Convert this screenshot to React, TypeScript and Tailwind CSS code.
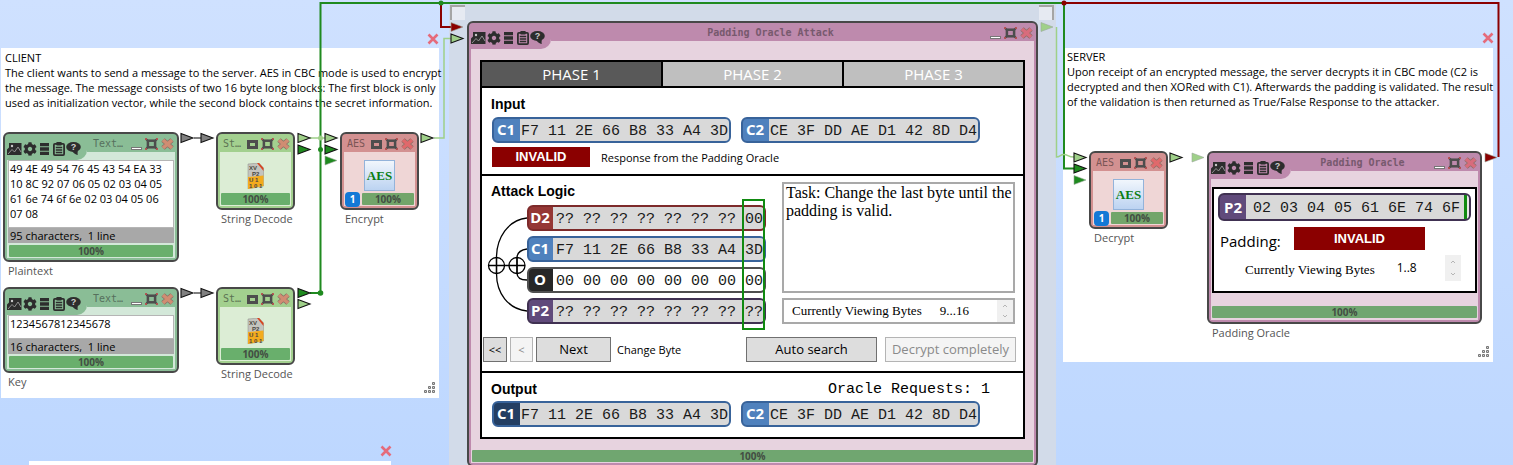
import React from "react";
import { FaCog } from "react-icons/fa";

const ui = "font-['Open_Sans','Noto_Sans',sans-serif]";
const mono = "font-['Liberation_Mono',monospace]";
const serif = "font-['Liberation_Serif',serif]";

type Theme = { outer: string; light: string; title: string; bar: string; closeFill: string };

const green: Theme = { outer: "bg-[#8abd96]", light: "bg-[#d3e8d9]", title: "text-[#56705d]", bar: "bg-[#69af6c]", closeFill: "#d08d72" };
const lime: Theme = { outer: "bg-[#a3d08f]", light: "bg-[#dcedd5]", title: "text-[#5c7353]", bar: "bg-[#69af6c]", closeFill: "#d08d72" };
const red: Theme = { outer: "bg-[#d39191]", light: "bg-[#efd6d6]", title: "text-[#7b5555]", bar: "bg-[#72a56a]", closeFill: "#e0696b" };
const pink: Theme = { outer: "bg-[#be8aad]", light: "bg-[#e7d3df]", title: "text-[#77596d]", bar: "bg-[#70a670]", closeFill: "#d86c7c" };

function PictureIcon() {
  return (
    <svg width="15" height="12" viewBox="0 0 15 12">
      <path d="M2 0h12.500V12H0V6.500l2-2z" fill="#2d2d2d" />
      <path d="M1 11l4-4.500 2.500 2.500 3.500-5 3 5" fill="none" stroke="#a9a9a9" strokeWidth="0.8" />
      <circle cx="5" cy="3" r="1.200" fill="#c9c9c9" />
    </svg>
  );
}

function ClipboardIcon() {
  return (
    <svg width="12" height="14" viewBox="0 0 12 14">
      <rect x="0.9" y="1.900" width="10.200" height="11.200" rx="1" fill="none" stroke="#2d2d2d" strokeWidth="1.800" />
      <rect x="3.200" y="0" width="5.600" height="3.400" rx="1" fill="#2d2d2d" />
      <path d="M2.800 5.500h6.400M2.800 8h6.400M2.800 10.500h6.400" stroke="#2d2d2d" strokeWidth="1.500" />
    </svg>
  );
}

function ListIcon() {
  return (
    <svg width="9" height="12" viewBox="0 0 9 12">
      <path d="M0 1.700h9M0 6h9M0 10.300h9" stroke="#2d2d2d" strokeWidth="3.300" />
    </svg>
  );
}

function HelpIcon() {
  return (
    <svg width="15" height="13" viewBox="0 0 15 13">
      <ellipse cx="7.500" cy="5" rx="7.300" ry="5" fill="#2d2d2d" />
      <path d="M6 8.500h6c-.5 2-.5 3-.2 4.500C9.500 12.500 7 11 6 8.500z" fill="#2d2d2d" />
      <text x="7.500" y="8.300" textAnchor="middle" fontFamily="Liberation Sans" fontSize="9" fontWeight="bold" fill="#d0d0d0">?</text>
    </svg>
  );
}

function Tools({ theme }: { theme: Theme }) {
  return (
    <div className={`flex h-[24px] items-center gap-px rounded-br-[10px] pr-[6px] pt-px text-[#2d2d2d] ${theme.outer}`}>
      <button type="button" aria-label="Presentation"><PictureIcon /></button>
      <button type="button" aria-label="Settings"><FaCog size={14} /></button>
      <button type="button" aria-label="Data" className="ml-[2px]"><ListIcon /></button>
      <button type="button" aria-label="Log" className="ml-[3px]"><ClipboardIcon /></button>
      <button type="button" aria-label="Help"><HelpIcon /></button>
    </div>
  );
}

function MaxIcon() {
  return (
    <svg width="13" height="12" viewBox="0 0 13 12">
      <path d="M0.500 0.500l3 3M12.500 0.500l-3 3M0.500 11.500l3-3M12.500 11.500l-3-3" stroke="#4d4d4d" strokeWidth="2" />
      <rect x="2.900" y="2.700" width="7.200" height="6.600" fill="none" stroke="#4d4d4d" strokeWidth="2.500" />
      <path d="M0 0h2v2H0zM11 0h2v2h-2zM0 10h2v2H0zM11 10h2v2h-2z" fill="#c94f4f" opacity="0.75" />
    </svg>
  );
}

function CloseIcon({ fill }: { fill: string }) {
  return (
    <svg width="13" height="12" viewBox="0 0 13 12">
      <path d="M2 2l9 8M11 2l-9 8" stroke="#8b6f66" strokeWidth="5" />
      <path d="M2 2l9 8M11 2l-9 8" stroke={fill} strokeWidth="3.600" />
    </svg>
  );
}

function WindowButtons({ theme, small }: { theme: Theme; small?: boolean }) {
  return (
    <div className="flex items-center gap-[3px]">
      {small ? (
        <button type="button" aria-label="Restore" className="h-[9px] w-[11px] border-[3px] border-[#4d4d4d]" />
      ) : (
        <button type="button" aria-label="Minimize" className="flex h-[12px] w-[11px] items-end">
          <span className="h-[3px] w-full border border-[#777] bg-white" />
        </button>
      )}
      <button type="button" aria-label="Maximize"><MaxIcon /></button>
      <button type="button" aria-label="Close"><CloseIcon fill={theme.closeFill} /></button>
    </div>
  );
}

function Title({ theme, children }: { theme: Theme; children: React.ReactNode }) {
  return (
    <h2 className={`flex-1 whitespace-nowrap font-['DejaVu_Sans_Mono',monospace] text-[10px] leading-[14px] ${theme.title}`}>{children}</h2>
  );
}

function Progress({ theme, className = "" }: { theme: Theme; className?: string }) {
  return (
    <div className={`h-[12px] rounded-[1px] text-center font-['Open_Sans',sans-serif] text-[10px] font-bold leading-[12px] text-[#434e43] ${theme.bar} ${className}`}>
      100%
    </div>
  );
}

function Frame({ theme, place, caption, children }: { theme: Theme; place: string; caption?: string; children: React.ReactNode }) {
  return (
    <section className={`absolute ${place}`}>
      <div className={`rounded-[6px] border-2 border-[#484848] p-[2px] ${theme.outer}`}>
        <div className={`flex flex-col ${theme.light}`}>{children}</div>
      </div>
      {caption && <p className={`mt-[2px] whitespace-nowrap pl-[5px] text-[11px] leading-[14px] text-[#555] ${ui}`}>{caption}</p>}
    </section>
  );
}

function WideHeader({ theme, title, center }: { theme: Theme; title: string; center?: boolean }) {
  return (
    <header className="flex items-start">
      <Tools theme={theme} />
      <div className={`flex h-[16px] flex-1 items-center pr-px ${center ? "text-center" : "pl-[6px]"} ${theme.outer}`}>
        <Title theme={theme}>{center ? <b>{title}</b> : title}</Title>
        <WindowButtons theme={theme} />
      </div>
    </header>
  );
}

function TextNode({ place, caption, text, status, area }: { place: string; caption: string; text: string; status: string; area: string }) {
  return (
    <Frame theme={green} place={place} caption={caption}>
      <WideHeader theme={green} title="Text…" />
      <textarea
        aria-label={caption}
        readOnly
        defaultValue={text}
        className={`mx-px block resize-none overflow-hidden border border-[#b5b5b5] bg-white px-px text-[11px] leading-[15px] text-black outline-none ${area} ${ui}`}
      />
      <p className={`mx-px whitespace-pre bg-[#a8a8a8] pl-[2px] text-[11px] leading-[15px] text-black ${ui}`}>{status}</p>
      <Progress theme={green} className="m-[2px] mb-px" />
    </Frame>
  );
}

function DecodeIcon() {
  return (
    <svg width="17" height="26" viewBox="0 0 17 26">
      <path d="M1 1l11-1 4.500 5v18L1 26z" fill="#c4c4be" stroke="#8d8d88" strokeWidth="0.500" />
      <path d="M1 14l15.500-1.500V23L1 26z" fill="#f3ab1d" />
      <path d="M10 0l6.500 8V5l-4.500-5z" fill="#d9441e" />
      <g fontFamily="Liberation Sans" fontSize="6" fontWeight="bold" fill="#4a4740">
        <text x="2" y="7">XV</text>
        <text x="5" y="13">P2</text>
        <text x="2" y="19">U 1</text>
        <text x="2" y="24.500">1 0 1</text>
      </g>
    </svg>
  );
}

function SmallHeader({ theme, title }: { theme: Theme; title: string }) {
  return (
    <header className={`flex h-[16px] items-center pl-[3px] pr-px ${theme.outer}`}>
      <Title theme={theme}>{title}</Title>
      <WindowButtons theme={theme} small />
    </header>
  );
}

function DecodeNode({ place }: { place: string }) {
  return (
    <Frame theme={lime} place={place} caption="String Decode">
      <SmallHeader theme={lime} title="St…" />
      <div className="flex h-[39px] items-end justify-center pb-[2px]"><DecodeIcon /></div>
      <Progress theme={lime} className="m-px mt-[2px]" />
    </Frame>
  );
}

function AesNode({ place, caption }: { place: string; caption: string }) {
  return (
    <Frame theme={red} place={place} caption={caption}>
      <SmallHeader theme={red} title="AES" />
      <div className="flex h-[39px] justify-center pt-[8px]">
        <div className="flex h-[31px] w-[31px] items-center justify-center border border-[#93b3da] bg-linear-to-b from-[#f1f6fc] to-[#bcd3f1] font-['Liberation_Serif',serif] text-[13px] font-bold text-[#0a7d12]">
          AES
        </div>
      </div>
      <div className="mb-px mt-[2px] flex h-[12px] items-center gap-[2px] px-px">
        <span className={`flex h-[15px] w-[15px] items-center justify-center rounded-[4px] bg-[#1379d6] text-[10px] font-bold text-white ${ui}`}>1</span>
        <Progress theme={red} className="flex-1" />
      </div>
    </Frame>
  );
}

type Tone = "blue" | "navy" | "red" | "black" | "purple";
const tones: Record<Tone, string> = {
  blue: "border-[#38639a] bg-[#4f81bd]",
  navy: "border-[#38639a] bg-[#243f63]",
  red: "border-[#7d2a2a] bg-[#953735]",
  black: "border-[#4f4f4f] bg-[#262626]",
  purple: "border-[#403152] bg-[#604a7b]",
};

function Bytes({ tone, label, value, slim, white }: { tone: Tone; label: string; value: string; slim?: boolean; white?: boolean }) {
  return (
    <div className={`flex h-[26px] w-[239px] overflow-hidden rounded-[6px] border-2 ${tones[tone]}`}>
      <span className={`flex items-center justify-center pb-px pr-[2px] font-['Open_Sans',sans-serif] text-[15px] font-bold text-white ${slim ? "w-[24px]" : "w-[26px]"}`}>{label}</span>
      <span className={`flex flex-1 items-center whitespace-pre pt-[3px] text-[15px] leading-[18px] text-[#1a1a1a] ${slim ? "pl-[3px]" : "pl-px"} ${white ? "bg-white" : "bg-[#d9d9d9]"} ${mono}`}>{value}</span>
    </div>
  );
}

function Invalid({ size }: { size: string }) {
  return (
    <strong className={`flex items-center justify-center bg-[#8b0000] font-['Liberation_Sans',sans-serif] text-[13px] text-white ${size}`}>INVALID</strong>
  );
}

function Heading({ children }: { children: React.ReactNode }) {
  return <h3 className="font-['Liberation_Sans',sans-serif] text-[14px] font-bold leading-[18px] text-black">{children}</h3>;
}

function Spinner({ size }: { size: string }) {
  return (
    <div className={`flex flex-col bg-[#f0f0f0] text-[#b5b5b5] ${size}`}>
      <button type="button" disabled aria-label="Previous bytes" className="flex flex-1 items-center justify-center">
        <svg width="4" height="3" viewBox="0 0 4 3"><path d="M0 3l2-2 2 2" fill="none" stroke="currentColor" /></svg>
      </button>
      <button type="button" disabled aria-label="Next bytes" className="flex flex-1 items-center justify-center">
        <svg width="4" height="3" viewBox="0 0 4 3"><path d="M0 0l2 2 2-2" fill="none" stroke="currentColor" /></svg>
      </button>
    </div>
  );
}

function Push({ children, className, disabled }: { children: React.ReactNode; className: string; disabled?: boolean }) {
  return (
    <button
      type="button"
      disabled={disabled}
      className={`h-[25px] whitespace-nowrap border pt-px ${disabled ? "border-[#b4b4b4] bg-[#f4f4f4] text-[#8a8a8a]" : "border-[#707070] bg-[#dddddd] text-black"} ${ui} ${className}`}
    >
      {children}
    </button>
  );
}

function XorDiagram() {
  return (
    <svg width="44" height="119" viewBox="0 0 44 119" fill="none" stroke="#000" strokeWidth="1.300">
      <path d="M44 13C25 15 13.500 33 13.500 52.500V68.500C13.500 88 25 104 44 106" />
      <path d="M44 44C37 45 34 48 34 53V68C34 72 37 75 44 75" />
      <circle cx="13.500" cy="60.500" r="8" />
      <circle cx="34" cy="60.500" r="8" />
      <path d="M5.500 60.500H42M13.500 52V69M34 52V69" />
    </svg>
  );
}

function AttackNode() {
  const phase = "flex-1 border-black text-[15px] text-white font-['Open_Sans',sans-serif]";
  return (
    <Frame theme={pink} place="left-[467px] top-[21px] w-[571px]">
      <WideHeader theme={pink} title="Padding Oracle Attack" center />
      <div className="mx-[9px] mt-[11px] border-2 border-black bg-white">
        <nav className="flex h-[26px] border-b-2 border-black">
          <button type="button" className={`${phase} bg-[#595959]`}>PHASE 1</button>
          <button type="button" className={`${phase} border-l-2 bg-[#bfbfbf]`}>PHASE 2</button>
          <button type="button" className={`${phase} border-l-2 bg-[#bfbfbf]`}>PHASE 3</button>
        </nav>

        <div className="border-b-2 border-black px-[9px] pb-[7px] pt-[7px]">
          <Heading>Input</Heading>
          <div className="mt-1 flex gap-[10px] pl-px">
            <Bytes tone="blue" label="C1" value="F7 11 2E 66 B8 33 A4 3D" />
            <Bytes tone="blue" label="C2" value="CE 3F DD AE D1 42 8D D4" />
          </div>
          <div className="mt-1 flex items-center gap-[11px] pl-px">
            <Invalid size="h-[20px] w-[98px]" />
            <span className={`text-[11px] leading-[15px] text-black ${ui}`}>Response from the Padding Oracle</span>
          </div>
        </div>

        <div className="border-b-2 border-black pb-[9px] pl-px pt-[6px]">
          <div className="flex items-start justify-between pr-[8px]">
            <div>
              <div className="pl-[8px]"><Heading>Attack Logic</Heading></div>
              <div className="mt-[5px] flex">
                <XorDiagram />
                <div className="relative flex flex-col gap-[5px]">
                  <Bytes slim tone="red" label="D2" value="?? ?? ?? ?? ?? ?? ?? 00" />
                  <Bytes slim tone="blue" label="C1" value="F7 11 2E 66 B8 33 A4 3D" />
                  <Bytes slim white tone="black" label="O" value="00 00 00 00 00 00 00 00" />
                  <Bytes slim tone="purple" label="P2" value="?? ?? ?? ?? ?? ?? ?? ??" />
                  <span className="absolute -bottom-[6px] -top-[6px] right-px w-[23px] border-2 border-[#118a11]" />
                </div>
              </div>
            </div>
            <div className="flex w-[233px] flex-col gap-[5px]">
              <p className={`h-[111px] border-2 border-[#a9a9a9] pl-[2px] text-[16px] leading-[18px] text-black ${serif}`}>
                Task: Change the last byte until the padding is valid.
              </p>
              <div className={`flex h-[26px] items-center border-2 border-[#a9a9a9] pl-[8px] text-[13px] text-black ${serif}`}>
                <span>Currently Viewing Bytes</span>
                <span className="ml-[18px] flex-1">9...16</span>
                <Spinner size="h-full w-[16px]" />
              </div>
            </div>
          </div>
          <div className="mt-[13px] flex items-center pr-[7px]">
            <Push className="w-[24px] text-[11px]">&lt;&lt;</Push>
            <Push disabled className="ml-[3px] w-[23px] text-[11px]">&lt;</Push>
            <Push className="ml-[3px] w-[75px] text-[13px]">Next</Push>
            <span className={`ml-[6px] flex-1 pt-px text-[11px] text-black ${ui}`}>Change Byte</span>
            <Push className="w-[131px] text-[13px]">Auto search</Push>
            <Push disabled className="ml-[8px] w-[131px] text-[13px]">Decrypt completely</Push>
          </div>
        </div>

        <div className="px-[9px] pb-[10px] pt-[7px]">
          <div className="flex items-center justify-between pr-[24px]">
            <Heading>Output</Heading>
            <span className={`whitespace-pre pt-px text-[15px] leading-[17px] text-black ${mono}`}>Oracle Requests: 1</span>
          </div>
          <div className="mt-[3px] flex gap-[10px] pl-px">
            <Bytes tone="navy" label="C1" value="F7 11 2E 66 B8 33 A4 3D" />
            <Bytes tone="blue" label="C2" value="CE 3F DD AE D1 42 8D D4" />
          </div>
        </div>
      </div>
      <Progress theme={pink} className="mx-px mb-px mt-[11px]" />
    </Frame>
  );
}

function OracleNode() {
  return (
    <Frame theme={pink} place="left-[1207px] top-[151px] w-[275px]" caption="Padding Oracle">
      <WideHeader theme={pink} title="Padding Oracle" center />
      <div className="mx-px mt-[8px] h-[106px] border-2 border-black bg-white px-[4px] pt-[4px]">
        <div className="flex h-[28px] overflow-hidden rounded-[6px] border-2 border-[#403152] bg-[#604a7b]">
          <span className="flex w-[26px] items-center justify-center font-['Open_Sans',sans-serif] text-[15px] font-bold text-white">P2</span>
          <span className={`flex flex-1 items-center whitespace-pre bg-[#d9d9d9] pl-[7px] pt-[3px] text-[15px] leading-[18px] text-[#1a1a1a] ${mono}`}>02 03 04 05 61 6E 74 6F</span>
          <span className="w-[3px] bg-[#118a11]" />
          <span className="w-[2px] bg-[#e8e8e8]" />
        </div>
        <div className="mt-[6px] flex h-[23px] items-start">
          <span className={`w-[76px] pl-[2px] pt-[2px] text-[15px] leading-[24px] text-black ${ui}`}>Padding:</span>
          <Invalid size="h-[23px] w-[131px]" />
        </div>
        <div className={`mt-[5px] flex items-center pl-[27px] pr-[10px] text-[13px] text-black ${serif}`}>
          <span className="pt-[3px]">Currently Viewing Bytes</span>
          <span className={`ml-[22px] flex-1 text-[12px] ${ui}`}>1..8</span>
          <Spinner size="h-[26px] w-[16px]" />
        </div>
      </div>
      <Progress theme={pink} className="mx-px mb-[2px] mt-[13px]" />
    </Frame>
  );
}

function Cross({ place }: { place: string }) {
  return (
    <button type="button" aria-label="Remove note" className={`absolute ${place}`}>
      <svg width="12" height="12" viewBox="0 0 12 12"><path d="M1.500 1.500l9 9M10.500 1.500l-9 9" stroke="#e56b7b" strokeWidth="2.600" /></svg>
    </button>
  );
}

function Grip() {
  return (
    <svg width="12" height="12" viewBox="0 0 12 12" className="absolute bottom-[4px] right-[3px]" fill="#d0d0d0" stroke="#777" strokeWidth="1">
      <path d="M8.500 0.500h2v2h-2zM8.500 4.500h2v2h-2zM4.500 4.500h2v2h-2zM8.500 8.500h2v2h-2zM4.500 8.500h2v2h-2zM0.500 8.500h2v2h-2z" />
    </svg>
  );
}

function Note({ place, title, lines }: { place: string; title: string; lines: string[] }) {
  return (
    <article className={`absolute whitespace-nowrap bg-white px-[4px] text-[11px] leading-[15px] text-black ${ui} ${place}`}>
      <h2>{title}</h2>
      <p className="whitespace-pre">{lines.join("\n")}</p>
      <Grip />
    </article>
  );
}

const LIGHT = "#9fd089";
const DARK = "#1f8a1f";
const GRAY = "#808080";
const MAROON = "#8b0000";

function Port({ x, y, fill, bare }: { x: number; y: number; fill: string; bare?: boolean }) {
  return <path d={`M${x} ${y - 4.5}L${x + 12} ${y}L${x} ${y + 4.5}Z`} fill={fill} stroke={bare ? "#9aa79a" : "#111"} strokeWidth={bare ? 0.6 : 1.1} />;
}

function Wires() {
  return (
    <svg className="pointer-events-none absolute inset-0 h-full w-full" fill="none" strokeWidth="2">
      <path d="M1064 3H1498.500V157" stroke={MAROON} />
      <path d="M441 3V27H451" stroke={MAROON} />
      <path d="M310 293H320.500V3H1064V168.500H1074" stroke={DARK} />
      <path d="M310 138H326M434 138H444V38.500H451" stroke={LIGHT} strokeWidth="1.500" />
      <path d="M1056.500 27V157C1060 157 1060 154.500 1064 154.500S1068 157 1074 157" stroke={LIGHT} strokeWidth="1.500" />
      <path d="M194 138H201M194 293H201" stroke={GRAY} />
      <circle cx="320.500" cy="138" r="2.500" fill={LIGHT} />
      <circle cx="320.500" cy="149.500" r="2.500" fill={DARK} />
      <circle cx="320.500" cy="293" r="2.800" fill={DARK} />
      <circle cx="441" cy="3" r="2.500" fill={DARK} />
      <circle cx="1064" cy="3" r="2.500" fill={MAROON} />
      <Port x={181} y={138} fill={GRAY} />
      <Port x={201} y={138} fill={GRAY} />
      <Port x={181} y={293} fill={GRAY} />
      <Port x={201} y={293} fill={GRAY} />
      <Port x={298} y={138} fill={LIGHT} />
      <Port x={298} y={149.5} fill={DARK} />
      <Port x={298} y={293} fill={DARK} />
      <Port x={298} y={304} fill={LIGHT} />
      <Port x={325} y={138} fill={LIGHT} />
      <Port x={325} y={149.5} fill={DARK} />
      <Port x={325} y={160.5} fill={DARK} bare />
      <Port x={421} y={138} fill={LIGHT} />
      <Port x={451} y={27} fill={MAROON} bare />
      <Port x={451} y={38.5} fill={LIGHT} />
      <Port x={1041} y={27} fill={LIGHT} bare />
      <Port x={1074} y={157.5} fill={LIGHT} />
      <Port x={1074} y={168.5} fill={DARK} />
      <Port x={1074} y={180} fill={DARK} bare />
      <Port x={1170} y={157.5} fill={LIGHT} />
      <Port x={1192} y={157.5} fill={LIGHT} bare />
      <Port x={1485} y={157.5} fill={MAROON} bare />
    </svg>
  );
}

const clientLines = [
  "The client wants to send a message to the server. AES in CBC mode is used to encrypt",
  "the message. The message consists of two 16 byte long blocks: The first block is only",
  "used as initialization vector, while the second block contains the secret information.",
];

const serverLines = [
  "Upon receipt of an encrypted message, the server decrypts it in CBC mode (C2 is",
  "decrypted and then XORed with C1). Afterwards the padding is validated. The result",
  "of the validation is then returned as True/False Response to the attacker.",
];

export default function App() {
  return (
    <main className="relative h-screen w-full overflow-hidden bg-linear-to-b from-[#cfe1ff] to-[#bdd7ff]">
      <div className="absolute bottom-0 left-[449px] top-[4px] w-[607px] bg-[#d2dbe9]">
        <span className="absolute left-px top-px h-[15px] w-[15px] border-l-2 border-t-2 border-[#a5a5a5] bg-[#e6eaf2]" />
        <span className="absolute right-[2px] top-px h-[15px] w-[15px] border-r-2 border-t-2 border-[#a5a5a5] bg-[#e6eaf2]" />
      </div>

      <Note place="left-[1px] top-[48px] h-[350px] w-[438px] pt-[2px]" title="CLIENT" lines={clientLines} />
      <Note place="left-[1063px] top-[48px] h-[314px] w-[430px] pt-px" title="SERVER" lines={serverLines} />
      <div className="absolute left-[29px] top-[461px] h-[40px] w-[362px] bg-white" />
      <Cross place="left-[427px] top-[33px]" />
      <Cross place="left-[1482px] top-[32px]" />
      <Cross place="left-[380px] top-[445px]" />

      <Wires />

      <TextNode
        place="left-[3px] top-[132px] w-[176px]"
        caption="Plaintext"
        area="h-[68px]"
        text="49 4E 49 54 76 45 43 54 EA 33 10 8C 92 07 06 05 02 03 04 05 61 6e 74 6f 6e 02 03 04 05 06 07 08"
        status="95 characters,  1 line"
      />
      <TextNode place="left-[3px] top-[287px] w-[176px]" caption="Key" area="h-[24px]" text="1234567812345678" status="16 characters,  1 line" />
      <DecodeNode place="left-[216px] top-[132px] w-[79px]" />
      <DecodeNode place="left-[216px] top-[287px] w-[79px]" />
      <AesNode place="left-[340px] top-[132px] w-[79px]" caption="Encrypt" />
      <AttackNode />
      <AesNode place="left-[1089px] top-[151px] w-[79px]" caption="Decrypt" />
      <OracleNode />
    </main>
  );
}
